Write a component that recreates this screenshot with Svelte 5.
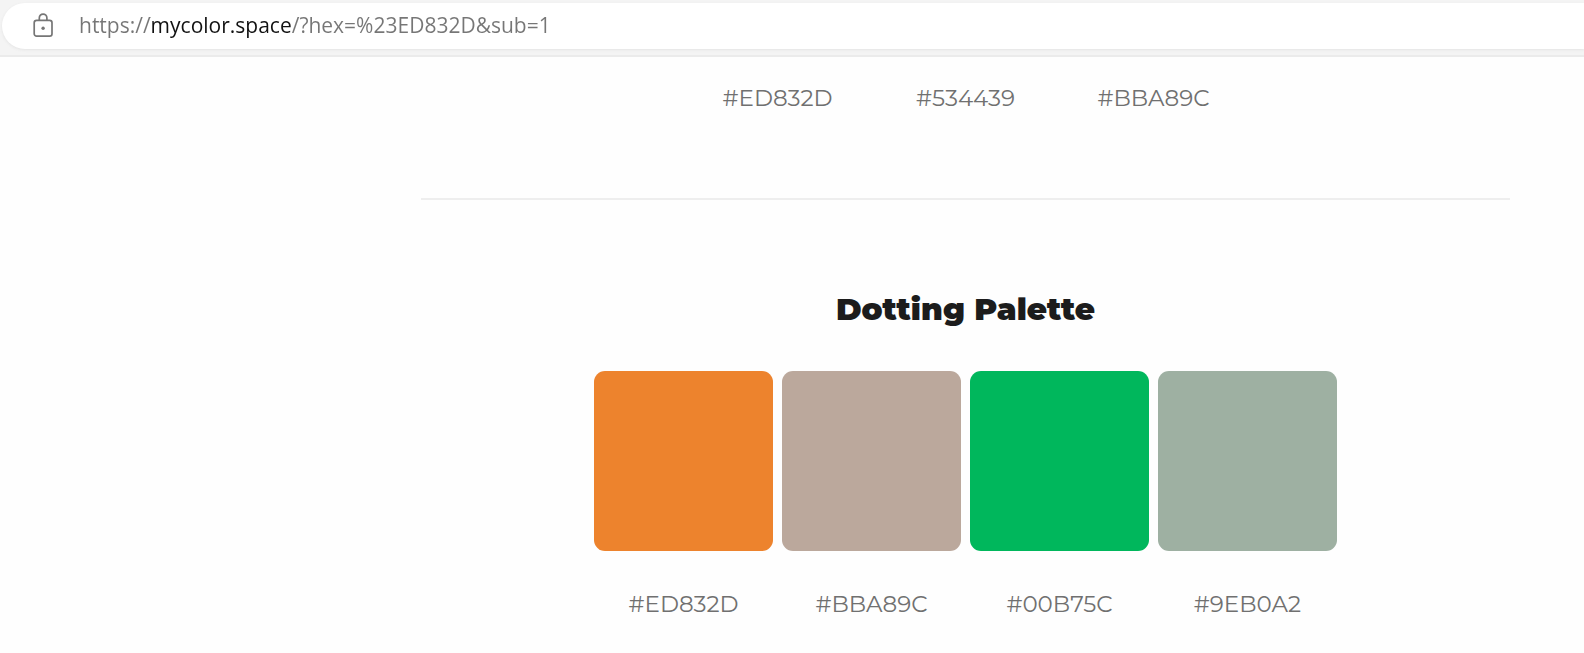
<script>
  let address = $state('https://mycolor.space/?hex=%23ED832D&sub=1');

  const previousCodes = ['#ED832D', '#534439', '#BBA89C'];
  const dotting = ['#ED832D', '#BBA89C', '#00B75C', '#9EB0A2'];
</script>

<header class="toolbar">
  <form class="address" onsubmit={(e) => e.preventDefault()}>
    <button class="lock" type="button" aria-label="View site information">
      <svg viewBox="0 0 22 26" width="22" height="26" fill="none" stroke="#767676" stroke-width="1.7">
        <rect x="2.200" y="7.300" width="17.800" height="15.900" rx="2.400" />
        <path d="M7.300 7.300V4.900a3.800 3.800 0 0 1 7.600 0V7.300" />
        <circle cx="11.100" cy="15.300" r="1.700" fill="#767676" stroke="none" />
      </svg>
    </button>
    <input class="url" type="text" aria-label="Address" spellcheck="false" bind:value={address} />
  </form>
</header>

<main>
  <section class="palette previous">
    <ul class="row">
      {#each previousCodes as code}
        <li class="code">{code}</li>
      {/each}
    </ul>
  </section>
  <section class="palette">
    <h2>Dotting Palette</h2>
    <ul class="row">
      {#each dotting as code}
        <li class="cell">
          <div class="swatch" style="background: {code}"></div>
          <div class="code">{code}</div>
        </li>
      {/each}
    </ul>
  </section>
</main>

<style>
  :global(body) {
    margin: 0;
    background: #fefefe;
  }

  .toolbar {
    padding: 3px 0 6px 2px;
    background: #f4f4f4;
    border-bottom: 2px solid #ebebeb;
  }

  .address {
    display: flex;
    align-items: center;
    height: 46px;
    padding-left: 30px;
    gap: 25px;
    background: #fff;
    border-radius: 23px 0 0 23px;
    box-shadow: 0 1px 3px #e4e4e4;
  }

  .lock {
    display: flex;
    padding: 0;
    border: 0;
    background: none;
  }

  .url {
    flex: 1;
    min-width: 0;
    padding: 0 0 2px;
    border: 0;
    outline: 0;
    font: 21px/30px "Open Sans", "Noto Sans", sans-serif;
    background: linear-gradient(90deg, #767676 71px, #111 71px 212px, #767676 212px);
    background-clip: text;
    -webkit-background-clip: text;
    -webkit-text-fill-color: transparent;
    color: #767676;
  }

  main {
    margin: 0 74px 0 421px;
    font-family: Montserrat, Inter, sans-serif;
    font-variant-ligatures: none;
  }

  .palette {
    display: flex;
    flex-direction: column;
    align-items: center;
  }

  .previous {
    padding: 27px 0 86px;
    border-bottom: 2px solid #eee;
  }

  .row {
    display: flex;
    justify-content: center;
    width: 100%;
    margin: 0;
    padding: 0;
    gap: 9px;
    list-style: none;
  }

  .cell,
  .row > .code {
    flex: 0 1 179px;
  }

  .code {
    font-size: 23px;
    line-height: 28px;
    text-align: center;
    color: #707070;
  }

  h2 {
    margin: 88px 0 41px;
    font-size: 31px;
    line-height: 42px;
    font-weight: 900;
    color: #1c1c1c;
  }

  .swatch {
    height: 180px;
    margin-bottom: 39px;
    border-radius: 11px;
  }
</style>
